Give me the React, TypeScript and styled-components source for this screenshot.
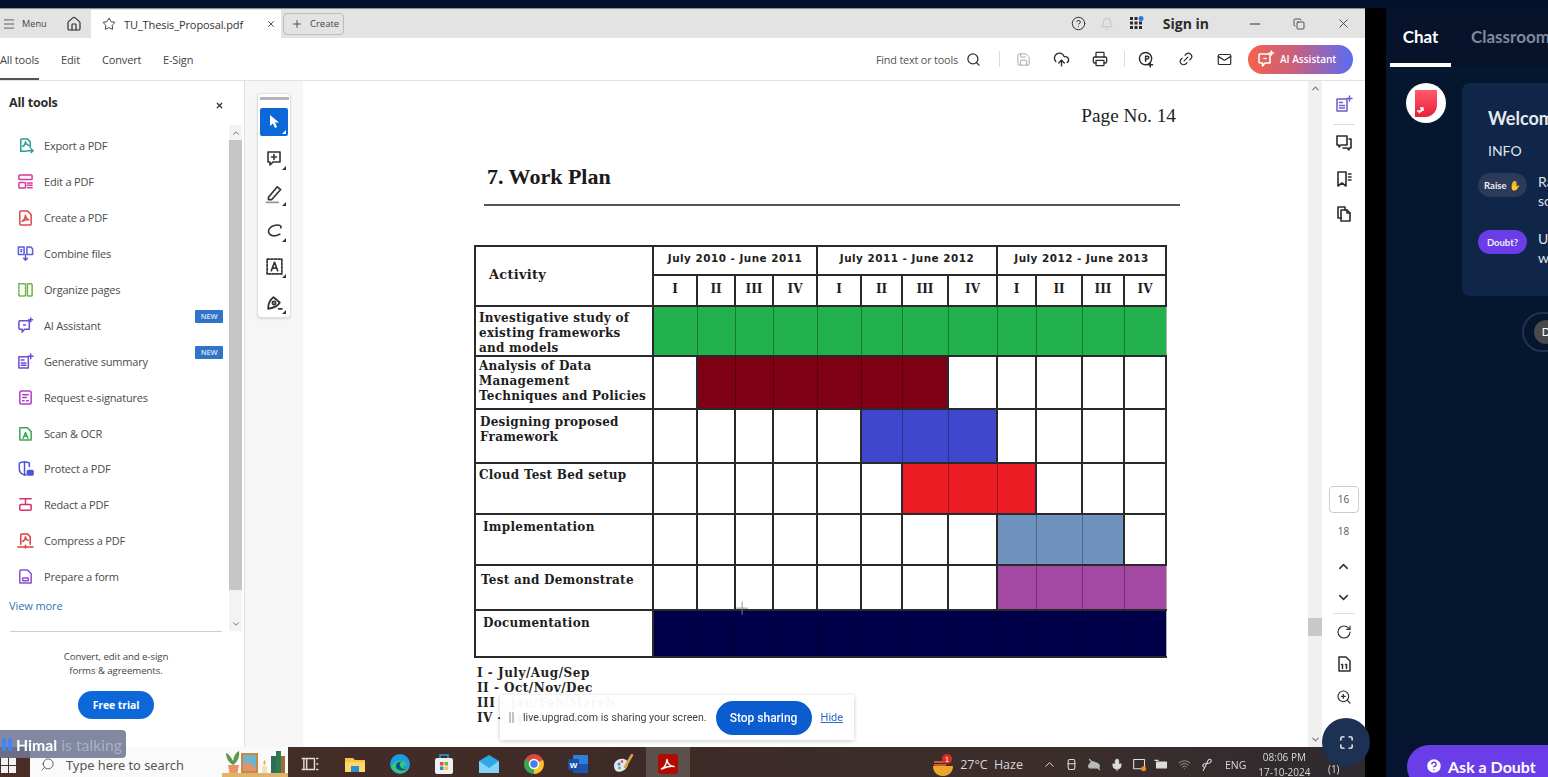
import React from "react";
import styled, { createGlobalStyle } from "styled-components";
import {
  Bell, ChevronDown, ChevronUp, CircleHelp, CloudUpload, Copy, Home, Link2, Mail, Menu, Minus,
  Plus, Printer, RotateCw, Save, Search, Star, X, ZoomIn, Maximize, Wifi, Mic,
} from "lucide-react";

const GlobalStyle = createGlobalStyle`
  html, body { margin: 0; padding: 0; background: #000; }
  body { font-family: "Open Sans", "Liberation Sans", sans-serif; overflow: hidden; }
  * { box-sizing: border-box; }
`;

const Page = styled.div`
  position: relative;
  width: 1548px;
  height: 777px;
  overflow: hidden;
  background: #000;
  display: flex;
  flex-direction: column;
`;
const TopStrip = styled.div`
  height: 8px;
  flex: none;
  background: #04132d;
  border-bottom: 1px solid #04132d;
`;
const Body = styled.div`
  flex: 1;
  min-height: 0;
  display: flex;
`;
const Share = styled.div`
  width: 1365px;
  flex: none;
  display: flex;
  flex-direction: column;
  background: #fff;
  filter: blur(0.35px);
`;
const Gutter = styled.div`
  width: 21px;
  flex: none;
  background: #000;
`;

/* tab bar */
const TabBar = styled.div`
  height: 30px;
  flex: none;
  background: #e3e3e3;
  border-top: 1px solid #8d8d8d;
  display: flex;
  align-items: center;
  color: #333;
`;
const MenuBtn = styled.div`
  width: 66px;
  padding-left: 2px;
  display: flex;
  align-items: center;
  gap: 6px;
  font-size: 9.2px;
  color: #444;
`;
const HomeBtn = styled.div`
  width: 25px;
  display: flex;
`;
const ActiveTab = styled.div`
  width: 190px;
  height: 28px;
  margin-top: 1px;
  align-self: flex-end;
  background: #fff;
  display: flex;
  align-items: center;
  padding-left: 11px;
  font-size: 11px;
  letter-spacing: -0.1px;
  color: #333;
  span { margin: 0 17px 0 8px; width: 125px; white-space: nowrap; }
`;
const CreateBtn = styled.div`
  margin-left: 2px;
  width: 61px;
  height: 22px;
  border: 1px solid #bdbdbd;
  border-radius: 4px;
  display: flex;
  align-items: center;
  padding-left: 7px;
  gap: 7px;
  font-size: 9.5px;
  color: #444;
`;
const TabRight = styled.div`
  margin-left: auto;
  display: flex;
  align-items: center;
`;
const SignIn = styled.div`
  font-size: 14px;
  font-weight: 700;
  color: #2a2a2a;
  margin: 0 24px 0 12px;
`;
const WinBtn = styled.div`
  width: 44px;
  display: flex;
  justify-content: center;
`;
const IconSlot = styled.div<{ $w: number }>`
  width: ${(p) => p.$w}px;
  display: flex;
  justify-content: center;
  align-items: center;
  flex: none;
`;

/* tool bar */
const ToolBar = styled.div`
  height: 43px;
  flex: none;
  display: flex;
  align-items: stretch;
  border-bottom: 1px solid #e2e2e2;
  background: #fff;
`;
const NavTab = styled.div<{ $active?: boolean; $w: number }>`
  width: ${(p) => p.$w}px;
  padding-top: 2px;
  font-size: 11px;
  color: #444;
  display: flex;
  align-items: center;
  letter-spacing: -0.15px;
  white-space: nowrap;
  border-bottom: ${(p) => (p.$active ? "2px solid #555" : "2px solid transparent")};
  margin-right: 22px;
`;
const ToolRight = styled.div`
  margin-left: auto;
  display: flex;
  align-items: center;
  padding-right: 12px;
`;
const FindText = styled.div`
  font-size: 10.9px;
  letter-spacing: -0.2px;
  color: #555;
  margin-right: 6px;
  white-space: nowrap;
`;
const Divider = styled.div`
  width: 1px;
  height: 16px;
  background: #ddd;
`;
const AiButton = styled.div`
  margin-left: 2px;
  width: 105px;
  height: 29px;
  border-radius: 15px;
  background: linear-gradient(90deg, #f2634c 0%, #c8607f 45%, #5a6cf5 100%);
  color: #fff;
  font-size: 10px;
  font-weight: 600;
  display: flex;
  align-items: center;
  padding-left: 9px;
  gap: 5px;
  white-space: nowrap;
`;
const TiltedLink = styled(Link2)`
  transform: rotate(-45deg);
`;

/* workspace */
const Workspace = styled.div`
  flex: 1;
  min-height: 0;
  display: flex;
`;
const Sidebar = styled.aside`
  width: 245px;
  flex: none;
  border-right: 1px solid #e0e0e0;
  display: flex;
  flex-direction: column;
`;
const SideHead = styled.div`
  height: 44px;
  flex: none;
  padding: 13px 20px 0 9px;
  display: flex;
  justify-content: space-between;
  font-size: 12.5px;
  font-weight: 700;
  color: #2c2c2c;
  letter-spacing: -0.2px;
  svg { margin-top: 7px; }
`;
const SideMain = styled.div`
  height: 506px;
  flex: none;
  display: flex;
`;
const ToolList = styled.div`
  width: 229px;
  padding-top: 3px;
  flex: none;
`;
const ToolRow = styled.div`
  position: relative;
  height: 35.9px;
  padding-left: 17px;
  display: flex;
  align-items: center;
  gap: 10px;
  font-size: 11px;
  letter-spacing: -0.2px;
  color: #4b4b4b;
`;
const NewBadge = styled.span`
  position: absolute;
  right: 6px;
  top: 3px;
  width: 28px;
  height: 13px;
  background: #2f74c9;
  color: #dbe8f7;
  font-size: 7.5px;
  font-weight: 600;
  text-align: center;
  line-height: 13px;
  border-radius: 1px;
`;
const ViewMore = styled.div`
  padding-left: 9px;
  font-size: 11px;
  letter-spacing: -0.1px;
  color: #2f74b5;
  line-height: 22px;
`;
const SideScroll = styled.div`
  width: 13px;
  flex: none;
  background: #f3f3f3;
  padding: 3px 0 2px;
  display: flex;
  flex-direction: column;
  align-items: center;
  gap: 2px;
  color: #666;
`;
const SideThumb = styled.div`
  width: 100%;
  height: 450px;
  background: #c6c6c6;
  margin-bottom: auto;
`;
const Promo = styled.div`
  margin: 0 22px 0 10px;
  border-top: 1px solid #cfcfcf;
  padding-top: 18px;
  text-align: center;
  font-size: 9.7px;
  line-height: 14px;
  color: #444;
  letter-spacing: -0.1px;
`;
const FreeTrial = styled.div`
  margin: 13px auto 0;
  width: 76px;
  height: 28px;
  border-radius: 14px;
  background: #0c68d8;
  color: #fff;
  font-size: 10.5px;
  font-weight: 700;
  line-height: 28px;
`;

/* document viewer */
const ToolGutter = styled.div`
  width: 58px;
  flex: none;
  background: #f6f6f6;
  padding: 12px 0 0 12px;
`;
const Palette = styled.div`
  width: 34px;
  height: 225px;
  background: #fff;
  border: 1px solid #e0e0e0;
  border-radius: 4px;
  box-shadow: 0 1px 2px rgba(0, 0, 0, 0.12);
  padding: 3px 2px;
  display: flex;
  flex-direction: column;
  align-items: center;
`;
const Handle = styled.div`
  width: 29px;
  height: 3px;
  background: #b5b5b5;
  margin-bottom: 8px;
  flex: none;
`;
const PaletteBtn = styled.div<{ $on?: boolean }>`
  position: relative;
  width: 28px;
  height: 28px;
  flex: none;
  margin-bottom: 8px;
  border-radius: 2px;
  background: ${(p) => (p.$on ? "#0c68d8" : "transparent")};
  color: ${(p) => (p.$on ? "#fff" : "#333")};
  display: flex;
  align-items: center;
  justify-content: center;
  &::after {
    content: "";
    position: absolute;
    right: 2px;
    bottom: 2px;
    border-style: solid;
    border-width: 0 0 4px 4px;
    border-color: transparent transparent ${(p) => (p.$on ? "#fff" : "#333")} transparent;
  }
`;
const Sheet = styled.main`
  flex: 1;
  min-width: 0;
  background: #fff;
  padding: 25px 0 0;
  overflow: hidden;
`;
const PageNo = styled.div`
  font-family: "Liberation Serif", serif;
  font-size: 19.3px;
  line-height: 20px;
  text-align: right;
  padding-right: 132px;
  color: #222;
`;
const Heading = styled.h2`
  margin: 38px 0 0 184px;
  font-family: "Liberation Serif", serif;
  font-size: 22px;
  line-height: 26px;
  font-weight: 700;
  color: #1a1a1a;
`;
const Rule = styled.div`
  margin: 14px 0 0 181px;
  width: 696px;
  height: 2px;
  background: #555;
`;
const Gantt = styled.table`
  margin: 39px 0 0 171px;
  width: 691px;
  table-layout: fixed;
  border-collapse: collapse;
  font-family: "DejaVu Serif", serif;
  font-weight: 700;
  color: #1d1d1d;
`;
const Cell = styled.td<{ $bg?: string }>`
  padding: 0 0 4px;
  border: 2px solid #2a2a2a;
  ${(p) => p.$bg && "border-left: 1px solid rgba(0, 0, 0, 0.3); border-right: 1px solid rgba(0, 0, 0, 0.3);"}
  background: ${(p) => p.$bg ?? "#fff"};
  text-align: center;
  font-size: 12px;
`;
const YearCell = styled(Cell)`
  padding-bottom: 6px;
  font-family: "DejaVu Sans", sans-serif;
  font-size: 10.4px;
  letter-spacing: 0.5px;
`;
const Label = styled.td<{ $indent: number; $top: number }>`
  padding: ${(p) => p.$top}px 0 0 ${(p) => p.$indent}px;
  border: 2px solid #2a2a2a;
  font-size: 12px;
  line-height: 15px;
  letter-spacing: 0.25px;
  vertical-align: top;
  white-space: nowrap;
  div:last-child { margin-bottom: -2px; }
`;
const ActivityLabel = styled(Label)`
  vertical-align: middle;
  padding-bottom: 3px;
  font-size: 13px;
`;
const Legend = styled.div`
  margin: 8px 0 0 174px;
  font-family: "DejaVu Serif", serif;
  font-weight: 700;
  font-size: 12px;
  line-height: 15px;
  letter-spacing: 0.5px;
  color: #222;
`;
const ViewScroll = styled.div`
  width: 14px;
  flex: none;
  background: #f0f0f0;
  padding: 2px 0;
  display: flex;
  flex-direction: column;
  align-items: center;
  color: #777;
`;
const ViewThumb = styled.div`
  width: 100%;
  height: 18px;
  background: #c8c8c8;
  margin: 524px 0 auto;
`;
const Rail = styled.div`
  width: 43px;
  flex: none;
  background: #fff;
  display: flex;
  flex-direction: column;
  align-items: center;
  padding-top: 14px;
  color: #333;
`;
const RailIcon = styled.div<{ $gap: number }>`
  height: 18px;
  margin-bottom: ${(p) => p.$gap}px;
  display: flex;
  align-items: center;
  justify-content: center;
  color: #333;
`;
const RailRule = styled.div`
  width: 22px;
  height: 1px;
  background: #ddd;
  margin-bottom: 9px;
  flex: none;
`;
const PageBox = styled.div`
  margin-top: 263px;
  width: 30px;
  height: 27px;
  border: 1px solid #ccc;
  border-radius: 4px;
  font-size: 10px;
  color: #555;
  text-align: center;
  line-height: 25px;
`;
const PageNum = styled.div`
  margin: 9px 0 17px;
  font-size: 10px;
  line-height: 18px;
  color: #555;
`;

/* task bar */
const TaskBar = styled.div`
  height: 30px;
  flex: none;
  background: linear-gradient(90deg, #4a2d26 0%, #3d2b28 50%, #3a2e2c 80%, #2e2a30 100%);
  display: flex;
  align-items: center;
  color: #ddd;
`;
const Start = styled.div`
  width: 30px;
  padding: 6px 0 0 1px;
  display: flex;
`;
const SearchBox = styled.div`
  width: 258px;
  height: 30px;
  background: #fafafa;
  display: flex;
  align-items: center;
  padding: 5px 0 0 10px;
  gap: 11px;
  color: #555;
  font-size: 12.8px;
  font-family: "Noto Sans", sans-serif;
  position: relative;
`;
const MirroredSearch = styled(Search)`
  transform: scaleX(-1);
`;
const Decor = styled.div`
  position: absolute;
  right: 0;
  top: 0;
`;
const TaskIcon = styled.div<{ $on?: boolean }>`
  width: 44.7px;
  height: 30px;
  flex: none;
  padding-top: 3px;
  display: flex;
  align-items: center;
  justify-content: center;
  background: ${(p) => (p.$on ? "#5c504c" : "transparent")};
`;
const TaskIcons = styled.div`
  display: flex;
`;
const Tray = styled.div`
  margin-left: auto;
  padding: 5px 20px 0 0;
  display: flex;
  align-items: center;
  font-size: 12px;
  color: #d8d8d8;
`;
const Weather = styled.div`
  font-size: 12.5px;
  margin: 0 15px 0 5px;
  white-space: nowrap;
  word-spacing: 3px;
`;
const TrayIcon = styled.div`
  width: 22.5px;
  display: flex;
  justify-content: center;
`;
const Lang = styled.div`
  font-size: 10.5px;
  margin: 0 12px 0 7px;
`;
const Clock = styled.div`
  font-size: 10px;
  line-height: 15px;
  text-align: center;
  white-space: nowrap;
`;
const NotifCount = styled(TrayIcon)`
  margin: 8px 0 0 12px;
  font-size: 10px;
  color: #ddd;
`;

/* right panel */
const Panel = styled.section`
  flex: 1;
  min-width: 0;
  overflow: hidden;
  background: #05162f;
  color: #fff;
  font-family: Lato, "Open Sans", sans-serif;
  display: flex;
  flex-direction: column;
`;
const PanelTabs = styled.div`
  height: 59px;
  flex: none;
  display: flex;
  padding-left: 4px;
  background: #06132b;
`;
const PanelTab = styled.div<{ $on?: boolean }>`
  flex: none;
  width: ${(p) => (p.$on ? "61px" : "auto")};
  margin-right: 20px;
  padding-top: 18px;
  text-align: center;
  white-space: nowrap;
  font-size: 17px;
  font-weight: 700;
  color: ${(p) => (p.$on ? "#fff" : "#7f8a9c")};
  border-bottom: ${(p) => (p.$on ? "4px solid #fff" : "none")};
`;
const Feed = styled.div`
  flex: 1;
  padding: 16px 0 0 20px;
`;
const Message = styled.div`
  display: flex;
  gap: 16px;
  width: 500px;
`;
const Avatar = styled.div`
  width: 40px;
  height: 40px;
  flex: none;
  border-radius: 50%;
  background: #fff;
  display: flex;
  align-items: center;
  justify-content: center;
`;
const Card = styled.div`
  width: 300px;
  height: 213px;
  border-radius: 8px;
  background: #0f2648;
  padding: 22px 0 0 16px;
`;
const Welcome = styled.div`
  margin-left: 10px;
  font-size: 18px;
  font-weight: 700;
  line-height: 26px;
  color: #e6e9ef;
`;
const Info = styled.div`
  margin: 11px 0 12px 10px;
  font-size: 14px;
  line-height: 18px;
  color: #dfe3ea;
`;
const CmdRow = styled.div`
  display: flex;
  gap: 11px;
  height: 57px;
`;
const CmdPill = styled.div<{ $purple?: boolean }>`
  width: 49px;
  height: 24px;
  flex: none;
  margin-top: 1px;
  border-radius: 12px;
  background: ${(p) => (p.$purple ? "#6a3de8" : "#2a3a58")};
  font-size: 9.5px;
  font-weight: 700;
  color: #eef0f5;
  display: flex;
  align-items: center;
  justify-content: center;
  gap: 2px;
  white-space: nowrap;
`;
const CmdText = styled.div`
  font-size: 14px;
  line-height: 19px;
  color: #dfe3ea;
  white-space: nowrap;
`;
const CenterChip = styled.div`
  margin: 16px 0 0 116px;
  width: 200px;
  height: 40px;
  border: 2px solid #22324f;
  border-radius: 20px;
  padding: 4px 0 0 10px;
`;
const ChipAvatar = styled.div`
  width: 24px;
  height: 24px;
  margin-top: 2px;
  border-radius: 50%;
  background: #4a4a4a;
  font-size: 11px;
  text-align: center;
  line-height: 24px;
`;
const PanelFoot = styled.div`
  height: 42px;
  flex: none;
  background: #061431;
  padding: 10px 0 0 21px;
`;
const AskBtn = styled.div`
  width: 200px;
  height: 44px;
  border-radius: 22px;
  background: #6a3de8;
  padding: 12px 0 0 18px;
  display: flex;
  gap: 5px;
  font-size: 16px;
  font-weight: 700;
  line-height: 19px;
  white-space: nowrap;
`;

/* overlays */
const TalkBadge = styled.div`
  position: absolute;
  left: 0;
  top: 730px;
  width: 126px;
  height: 28px;
  background: rgba(112, 120, 146, 0.88);
  border-radius: 0 4px 4px 0;
  display: flex;
  align-items: center;
  padding-left: 2px;
  font-family: Lato, sans-serif;
  font-size: 15.8px;
  font-weight: 700;
  color: #fff;
  white-space: nowrap;
  span { color: #aab0c2; margin-left: 4px; font-weight: 400; }
`;
const TalkBars = styled.div`
  display: flex;
  gap: 2px;
  margin-right: 4px;
  i { width: 4px; height: 13px; background: #3f86f5; border-radius: 2px; }
`;
const SharePrompt = styled.div`
  position: absolute;
  left: 500px;
  top: 695px;
  width: 354px;
  height: 45px;
  background: rgba(255, 255, 255, 0.96);
  box-shadow: 0 1px 4px rgba(0, 0, 0, 0.22);
  border-radius: 2px;
  display: flex;
  align-items: center;
  padding-left: 9px;
  font-family: Roboto, sans-serif;
  font-size: 10.6px;
  color: #444;
  white-space: nowrap;
`;
const Grip = styled.div`
  width: 5px;
  height: 11px;
  border-left: 2px solid #c4c4c4;
  border-right: 2px solid #c4c4c4;
  margin-right: 9px;
`;
const StopBtn = styled.div`
  margin-left: 9px;
  width: 96px;
  height: 34px;
  border-radius: 17px;
  background: #0b5ccf;
  color: #fff;
  font-size: 12px;
  font-weight: 500;
  text-align: center;
  line-height: 34px;
`;
const HideLink = styled.div`
  margin-left: 9px;
  font-size: 11px;
  color: #2b6cc4;
  text-decoration: underline;
`;
const FullBtn = styled.div`
  position: absolute;
  left: 1322px;
  top: 718px;
  width: 48px;
  height: 48px;
  border-radius: 50%;
  background: #1c3154;
  color: #fff;
  display: flex;
  align-items: center;
  justify-content: center;
`;
const Crosshair = styled.div`
  position: absolute;
  left: 735px;
  top: 600px;
  width: 15px;
  height: 17px;
  color: #8a8a8a;
`;

const Ico = ({ c = "currentColor", s = 16, w = 1.4, children }: { c?: string; s?: number; w?: number; children: React.ReactNode }) => (
  <svg width={s} height={s} viewBox="0 0 18 18" fill="none" stroke={c} strokeWidth={w} strokeLinecap="round" strokeLinejoin="round">
    {children}
  </svg>
);

const tools = [
  { name: "Export a PDF", c: "#2b9c96", d: <><path d="M4 15V3a1 1 0 0 1 1-1h6l3 3v6" /><path d="M4 15h6" /><path d="M6 10c2-1 3-3 3-5 0 2 2 4 4 4" /><path d="M11 14.5h6M15 12.5l2 2-2 2" /></> },
  { name: "Edit a PDF", c: "#d6399a", d: <><rect x="2" y="2" width="14" height="5" rx="1" /><rect x="2" y="10" width="7" height="6" rx="1" /><path d="M11 10.5h5M11 13h5M11 15.5h5" /></> },
  { name: "Create a PDF", c: "#e0474c", d: <><path d="M3 16V3a1 1 0 0 1 1-1h7l4 4v10a1 1 0 0 1-1 1H4a1 1 0 0 1-1-1Z" /><path d="M5.5 13c2-1 3.2-4 3.4-6.5C9.2 9 10.5 11 12.5 11.5c-2.5-.3-5 .3-7 1.5Z" /></> },
  { name: "Combine files", c: "#5a5fd8", d: <><path d="M1.5 2h6v8h-6zM10.5 2h4l2 2v6h-6z" /><path d="M4 5h1M4 7h1M9 10v6M7 14l2 2 2-2" /></> },
  { name: "Organize pages", c: "#6cb33f", d: <><path d="M2 3h7v13H2z" strokeDasharray="2 1.5" /><rect x="11" y="3" width="5" height="13" rx="1" /></> },
  { name: "AI Assistant", c: "#6a4fd4", badge: true, d: <><path d="M3 4h10v9H8l-2.5 3v-3H3a1 1 0 0 1-1-1V5a1 1 0 0 1 1-1Z" /><path d="M7 8.5h2" /><path d="M14.5 1v4M12.5 3h4" /></> },
  { name: "Generative summary", c: "#6a4fd4", badge: true, d: <><path d="M2 4h10v12H2z" /><path d="M4.5 7.5h3M4.5 10.5h5M4.5 13h5" /><path d="M14.5 1v5M12 3.5h5" /></> },
  { name: "Request e-signatures", c: "#b140c7", d: <><rect x="3" y="2" width="12" height="14" rx="2" /><path d="M6 6h6M6 9h4M6 12.5h1.5M10 12.5h2" /></> },
  { name: "Scan & OCR", c: "#3fa654", d: <><path d="M3 16V3h8l4 4v9z" /><path d="M6.5 14l2.5-6 2.5 6M7.5 12h3" /></> },
  { name: "Protect a PDF", c: "#4c56d6", d: <><path d="M8 2C5 2 2.5 3 2.5 3v7c0 3 3 5 5.5 6 1 0 1.5-.5 1.5-.5" /><path d="M8 2v14" /><path d="M8 2c2 0 4 .5 5 1v4" /><rect x="11" y="11" width="6" height="5" rx="1" fill="#4c56d6" /></> },
  { name: "Redact a PDF", c: "#d6336c", d: <><path d="M3 3h12M9 3v6" /><rect x="3" y="9" width="12" height="6" rx="1" /></> },
  { name: "Compress a PDF", c: "#dc3f3f", d: <><path d="M4 13V3a1 1 0 0 1 1-1h6l3 3v8" /><path d="M6 10c2-1 3-3 3-5 0 2 2 4 3 4" /><path d="M1 16h16M9 14v3" /></> },
  { name: "Prepare a form", c: "#8d4fd0", d: <><path d="M3 16V3a1 1 0 0 1 1-1h7l4 4v10z" /><rect x="6" y="10.5" width="6" height="3" rx=".5" /></> },
];

const palette = [
  <svg key="a" width="14" height="16" viewBox="0 0 14 16" fill="currentColor"><path d="M3 1v11l3-2.5 2 4.5 2-1-2-4.5h4z" /></svg>,
  <Ico key="b" s={18} w={1.6}><path d="M3 3h12v10H8l-3 3v-3H3z" /><path d="M9 5.5v5M6.5 8h5" /></Ico>,
  <Ico key="c" s={20} w={1.5}><path d="M4 12 12 2.5l3 2.5-8 9H4z" /><path d="M2 16.5h11" stroke="#999" /></Ico>,
  <Ico key="d" s={19} w={1.5}><path d="M5 13C1.5 10 4 5 10 4c4-.7 6 1 5 2.5" /><path d="M5 13c2 1.5 6 1 9-.5" /></Ico>,
  <Ico key="e" s={19} w={1.6}><rect x="2" y="2" width="14" height="14" strokeDasharray="2 1.5" /><path d="M6 13 9 5l3 8M7 10.5h4" /></Ico>,
  <Ico key="f" s={19} w={1.7}><path d="M3 15c0-4 1-8 5-11l6 5c-2 4-6 5-11 6Z" /><circle cx="8.5" cy="9.5" r="1.5" /><path d="M13 15h3" /></Ico>,
];

const colWidths = [178, 44, 38, 38, 44, 44, 41, 46, 49, 39, 46, 42, 42];
const quarters = ["I", "II", "III", "IV", "I", "II", "III", "IV", "I", "II", "III", "IV"];
const rows = [
  { label: ["Investigative study of", "existing frameworks", "and models"], h: 50, indent: 3, top: 4, color: "#22b14c", from: 0, to: 11 },
  { label: ["Analysis of Data", "Management", "Techniques and Policies"], h: 53, indent: 3, top: 2, color: "#7f0015", from: 1, to: 6 },
  { label: ["Designing proposed", "Framework"], h: 54, indent: 4, top: 5, color: "#3f48cc", from: 5, to: 7 },
  { label: ["Cloud Test Bed setup"], h: 51, indent: 3, top: 4, color: "#ed1c24", from: 6, to: 8 },
  { label: ["Implementation"], h: 51, indent: 7, top: 5, color: "#7092be", from: 8, to: 10 },
  { label: ["Test and Demonstrate"], h: 45, indent: 5, top: 7, color: "#a349a4", from: 8, to: 11 },
  { label: ["Documentation"], h: 47, indent: 7, top: 5, color: "#00004a", from: 0, to: 11 },
];

const AppIcons = [
  <Ico key="tv" s={20} c="#ddd" w={1.3}><path d="M2 4h3M2 14h3M6 4h7v10H6zM15 4h1M15 9h1M15 14h1M3.5 4v10" /></Ico>,
  <svg key="ex" width="22" height="20" viewBox="0 0 22 20"><path d="M1 4h8l2 2h10v12H1z" fill="#f6c445" /><path d="M1 8h20v10H1z" fill="#fbd868" /><rect x="7" y="12" width="8" height="6" fill="#2a8fd8" /></svg>,
  <svg key="ed" width="22" height="22" viewBox="0 0 22 22"><circle cx="11" cy="11" r="10" fill="#1b9de2" /><path d="M2 14c3-7 11-8 15-4 1 2-1 3-4 3 2 3 5 3 7 1-2 5-8 8-13 5-2-1-4-3-5-5Z" fill="#37c76d" /><path d="M7 13c0-3 3-5 6-4-2 0-3 2-2 4 1 3 5 4 8 2-4 4-12 3-12-2Z" fill="#0c4d92" /></svg>,
  <svg key="st" width="22" height="22" viewBox="0 0 22 22"><rect x="2" y="5" width="18" height="16" rx="2" fill="#f0f0f0" /><path d="M7 5V2h8v3" fill="none" stroke="#2a9fd8" strokeWidth="1.5" /><rect x="7" y="9" width="3.5" height="3.5" fill="#e74c3c" /><rect x="11.5" y="9" width="3.5" height="3.5" fill="#6cb33f" /><rect x="7" y="13.5" width="3.5" height="3.5" fill="#2a8fd8" /><rect x="11.5" y="13.5" width="3.5" height="3.5" fill="#f6c445" /></svg>,
  <svg key="ma" width="22" height="20" viewBox="0 0 22 20"><path d="M1 7 11 1l10 6v12H1z" fill="#2fa9e6" /><path d="m1 7 10 7 10-7v12H1z" fill="#7fd4f7" /></svg>,
  <svg key="ch" width="22" height="22" viewBox="0 0 22 22"><circle cx="11" cy="11" r="10" fill="#e0483d" /><path d="M11 11 2.5 6A10 10 0 0 0 11 21z" fill="#35a853" /><path d="M11 11v10a10 10 0 0 0 9-14z" fill="#f8c52c" /><circle cx="11" cy="11" r="4.5" fill="#3f83ea" stroke="#fff" strokeWidth="1.5" /></svg>,
  <svg key="wd" width="22" height="20" viewBox="0 0 22 20"><rect x="6" y="1" width="15" height="18" rx="1" fill="#2f7fe0" /><rect x="6" y="10" width="15" height="9" fill="#1a55b0" /><rect x="1" y="5" width="11" height="11" rx="1" fill="#184ea6" /><text x="6.5" y="13.5" fontSize="8" fontWeight="700" fill="#fff" textAnchor="middle" fontFamily="Liberation Sans, sans-serif">W</text></svg>,
  <svg key="pa" width="22" height="22" viewBox="0 0 22 22"><path d="M2 13c0-5 5-8 10-7 4 1 5 5 3 8-2 4-8 6-11 4-1-1-2-3-2-5Z" fill="#dfe6ee" /><circle cx="7" cy="11" r="1.5" fill="#3f83ea" /><circle cx="10" cy="8.5" r="1.2" fill="#e0483d" /><circle cx="7.5" cy="15" r="1.4" fill="#6cb33f" /><path d="m13 14 7-12" stroke="#d8a14a" strokeWidth="2.5" strokeLinecap="round" /></svg>,
  <svg key="ac" width="22" height="22" viewBox="0 0 22 22"><rect x="1" y="1" width="20" height="20" rx="3" fill="#b30b00" /><path d="M4.5 16c3-1.5 5-5 5.5-9.5.5 4 3 6.5 7 7-4-.5-8.5.5-12.5 2.5Z" fill="none" stroke="#fff" strokeWidth="1.5" strokeLinejoin="round" /></svg>,
];

export default function App() {
  return (
    <Page>
      <GlobalStyle />
      <TopStrip />
      <Body>
        <Share>
          <TabBar>
            <MenuBtn>
              <Menu size={14} strokeWidth={1.4} />
              Menu
            </MenuBtn>
            <HomeBtn>
              <Home size={16} strokeWidth={1.8} />
            </HomeBtn>
            <ActiveTab>
              <Star size={14} strokeWidth={1.6} />
              <span>TU_Thesis_Proposal.pdf</span>
              <X size={10} strokeWidth={2} />
            </ActiveTab>
            <CreateBtn>
              <Plus size={12} strokeWidth={1.8} />
              Create
            </CreateBtn>
            <TabRight>
              <IconSlot $w={29}><CircleHelp size={15} strokeWidth={1.6} /></IconSlot>
              <IconSlot $w={29}><Bell size={14} strokeWidth={1.2} color="#b5b5b5" /></IconSlot>
              <IconSlot $w={29}>
                <svg width="15" height="15" viewBox="0 0 15 15" fill="#2c2c2c">
                  {[1, 5.5, 10].flatMap((x) => [1, 5.5, 10].map((y) => <rect key={`${x}-${y}`} x={x} y={y} width="3" height="3" />))}
                  <circle cx="12" cy="2.5" r="2.5" fill="#2f74f0" />
                </svg>
              </IconSlot>
              <SignIn>Sign in</SignIn>
              <WinBtn><Minus size={16} strokeWidth={1.6} /></WinBtn>
              <WinBtn><Copy size={12} strokeWidth={1.6} /></WinBtn>
              <WinBtn><X size={15} strokeWidth={1.3} /></WinBtn>
            </TabRight>
          </TabBar>

          <ToolBar>
            <NavTab $active $w={39}>All tools</NavTab>
            <NavTab $w={19}>Edit</NavTab>
            <NavTab $w={39}>Convert</NavTab>
            <NavTab $w={32}>E-Sign</NavTab>
            <ToolRight>
              <FindText>Find text or tools</FindText>
              <IconSlot $w={18}><Search size={15} strokeWidth={2.1} color="#333" /></IconSlot>
              <IconSlot $w={17} />
              <Divider />
              <IconSlot $w={46}><Save size={15} strokeWidth={1.3} color="#999" /></IconSlot>
              <IconSlot $w={30}><CloudUpload size={17} strokeWidth={1.9} color="#2c2c2c" /></IconSlot>
              <IconSlot $w={48}><Printer size={16} strokeWidth={1.9} color="#2c2c2c" /></IconSlot>
              <Divider />
              <IconSlot $w={43}>
                <Ico s={17} c="#2c2c2c" w={1.5}><circle cx="8" cy="8" r="6.5" /><path d="M8 11V5.5h2a1.5 1.5 0 0 1 0 3H8M13 12v5M10.5 14.5h5" /></Ico>
              </IconSlot>
              <IconSlot $w={35}><TiltedLink size={16} strokeWidth={1.8} color="#2c2c2c" /></IconSlot>
              <IconSlot $w={43}><Mail size={15} strokeWidth={1.9} color="#2c2c2c" /></IconSlot>
              <AiButton>
                <Ico s={18} c="#fff" w={1.6}><path d="M3 4h10v9H8l-2.5 3v-3H3a1 1 0 0 1-1-1V5a1 1 0 0 1 1-1Z" /><path d="M7 8.5h2" /><path d="M14.5 1v4M12.5 3h4" /></Ico>
                AI Assistant
              </AiButton>
            </ToolRight>
          </ToolBar>

          <Workspace>
            <Sidebar>
              <SideHead>
                All tools
                <X size={9} strokeWidth={3.2} color="#333" />
              </SideHead>
              <SideMain>
                <ToolList>
                  {tools.map((t) => (
                    <ToolRow key={t.name}>
                      <Ico c={t.c} s={17} w={1.6}>{t.d}</Ico>
                      {t.name}
                      {t.badge && <NewBadge>NEW</NewBadge>}
                    </ToolRow>
                  ))}
                  <ViewMore>View more</ViewMore>
                </ToolList>
                <SideScroll>
                  <ChevronUp size={10} strokeWidth={2.2} />
                  <SideThumb />
                  <ChevronDown size={10} strokeWidth={2.2} />
                </SideScroll>
              </SideMain>
              <Promo>
                Convert, edit and e-sign
                <br />
                forms &amp; agreements.
                <FreeTrial>Free trial</FreeTrial>
              </Promo>
            </Sidebar>

            <ToolGutter>
              <Palette>
                <Handle />
                {palette.map((icon, i) => (
                  <PaletteBtn key={i} $on={i === 0}>{icon}</PaletteBtn>
                ))}
              </Palette>
            </ToolGutter>

            <Sheet>
              <PageNo>Page No. 14</PageNo>
              <Heading>7. Work Plan</Heading>
              <Rule />
              <Gantt>
                <colgroup>
                  {colWidths.map((w, i) => <col key={i} style={{ width: w }} />)}
                </colgroup>
                <tbody>
                  <tr style={{ height: 29 }}>
                    <ActivityLabel $indent={13} $top={0} rowSpan={2}>Activity</ActivityLabel>
                    <YearCell colSpan={4}>July 2010 - June 2011</YearCell>
                    <YearCell colSpan={4}>July 2011 - June 2012</YearCell>
                    <YearCell colSpan={4}>July 2012 - June 2013</YearCell>
                  </tr>
                  <tr style={{ height: 31 }}>
                    {quarters.map((q, i) => <Cell key={i}>{q}</Cell>)}
                  </tr>
                  {rows.map((r) => (
                    <tr key={r.label[0]} style={{ height: r.h }}>
                      <Label $indent={r.indent} $top={r.top}>
                        {r.label.map((l) => <div key={l}>{l}</div>)}
                      </Label>
                      {quarters.map((_, i) => (
                        <Cell key={i} $bg={i >= r.from && i <= r.to ? r.color : undefined} />
                      ))}
                    </tr>
                  ))}
                </tbody>
              </Gantt>
              <Legend>
                <div>I - July/Aug/Sep</div>
                <div>II - Oct/Nov/Dec</div>
                <div>III - Jan/Feb/March</div>
                <div>IV - Apr/May/June</div>
              </Legend>
            </Sheet>

            <ViewScroll>
              <ChevronUp size={11} strokeWidth={2.4} />
              <ViewThumb />
              <ChevronDown size={11} strokeWidth={2.4} />
            </ViewScroll>

            <Rail>
              <RailIcon $gap={11}>
                <Ico s={18} c="#6a5fc8" w={1.5}><path d="M2 4h10v12H2z" /><path d="M4.5 7.5h3M4.5 10.5h5M4.5 13h5" /><path d="M14.5 1v5M12 3.5h5" /></Ico>
              </RailIcon>
              <RailRule />
              <RailIcon $gap={18}>
                <Ico s={18} c="#2c2c2c" w={1.6}><path d="M2 2h10v9H6l-2 2v-2H2z" /><path d="M14 5h2v9h-2v2l-2-2H8" /></Ico>
              </RailIcon>
              <RailIcon $gap={17}>
                <Ico s={18} c="#2c2c2c" w={1.6}><path d="M3 2h8v14l-4-3-4 3z" /><path d="M13.5 4H16M13.5 7H16M13.5 10H16" /></Ico>
              </RailIcon>
              <RailIcon $gap={0}>
                <Ico s={18} c="#2c2c2c" w={1.6}><path d="M6 5h6l3 3v8H6z" /><path d="M12 5v3h3" /><path d="M6 13H3V2h7v3" /></Ico>
              </RailIcon>
              <PageBox>16</PageBox>
              <PageNum>18</PageNum>
              <RailIcon $gap={13}><ChevronUp size={15} strokeWidth={2.4} /></RailIcon>
              <RailIcon $gap={7}><ChevronDown size={15} strokeWidth={2.4} /></RailIcon>
              <RailRule />
              <RailIcon $gap={14}><RotateCw size={16} strokeWidth={1.7} /></RailIcon>
              <RailIcon $gap={15}>
                <Ico s={18} c="#2c2c2c" w={1.5}><path d="M4 16V2h7l4 4v10z" /><path d="M6.5 9.5h1v4M10.5 9.5h1v4" /></Ico>
              </RailIcon>
              <RailIcon $gap={0}><ZoomIn size={16} strokeWidth={1.8} /></RailIcon>
            </Rail>
          </Workspace>

          <TaskBar>
            <Start>
              <svg width="15" height="15" viewBox="0 0 15 15" fill="#f2f2f2">
                <rect width="7" height="7" /><rect x="8" width="7" height="7" /><rect y="8" width="7" height="7" /><rect x="8" y="8" width="7" height="7" />
              </svg>
            </Start>
            <SearchBox>
              <MirroredSearch size={15} strokeWidth={1.4} />
              Type here to search
              <Decor>
                <svg width="66" height="30" viewBox="0 0 66 30">
                  <rect x="0" y="26" width="66" height="4" fill="#e0b36a" />
                  <path d="M6 18h11l-1.5 8h-8z" fill="#e89467" />
                  <path d="M11 18C6 15 4 10 4 6c3 1 5 4 7 8 1-4 2-8 6-10 1 5-1 11-6 14Z" fill="#5b9a50" />
                  <rect x="19" y="6" width="17" height="20" fill="#c9893f" />
                  <rect x="21" y="8" width="13" height="16" fill="#6fb4cf" />
                  <path d="M21 24v-6l5-3 8 6v3z" fill="#e0946c" />
                  <rect x="40" y="19" width="5" height="7" fill="#f3e1b8" />
                  <path d="M42.5 13c1.5 2 1.5 4 0 5-1.5-1-1.5-3 0-5Z" fill="#f2a73b" />
                  <rect x="49" y="9" width="5" height="17" fill="#2c6e56" />
                  <rect x="54" y="4" width="5" height="22" fill="#2a7d4f" />
                  <rect x="59" y="9" width="4" height="17" fill="#a5683f" />
                </svg>
              </Decor>
            </SearchBox>
            <TaskIcons>
              {AppIcons.map((icon, i) => (
                <TaskIcon key={i} $on={i === AppIcons.length - 1}>{icon}</TaskIcon>
              ))}
            </TaskIcons>
            <Tray>
              <svg width="24" height="24" viewBox="0 0 24 24">
                <path d="M2 13h20c0 6-4 10-10 10S2 19 2 13Z" fill="#eea52e" />
                <path d="M3 9h10M3 12h12" stroke="#c85a30" strokeWidth="2" />
                <circle cx="16" cy="6" r="5" fill="#e02b20" />
                <text x="16" y="9" fontSize="8" fill="#fff" textAnchor="middle" fontFamily="Liberation Sans, sans-serif">1</text>
              </svg>
              <Weather>27°C Haze</Weather>
              <TrayIcon><ChevronUp size={15} strokeWidth={1.6} /></TrayIcon>
              <TrayIcon><Ico s={15} c="#ddd" w={1.3}><rect x="5" y="3" width="8" height="12" rx="2" /><path d="M5 8h8" /></Ico></TrayIcon>
              <TrayIcon><Ico s={15} c="#bbb" w={1.5}><path d="M3 13h11c2-3-1-6-4-6-2-2-6-1-7 2-1 1-1 3 0 4Z" fill="#bbb" /><path d="m3 3 12 12" /></Ico></TrayIcon>
              <TrayIcon><Mic size={14} fill="#ddd" strokeWidth={1.5} /></TrayIcon>
              <TrayIcon><Ico s={15} c="#ddd" w={1.3}><rect x="2" y="3" width="13" height="11" /><circle cx="14" cy="14" r="3" fill="#f58a1f" stroke="none" /></Ico></TrayIcon>
              <TrayIcon><Ico s={15} c="#ddd" w={1.3}><rect x="3" y="6" width="12" height="7" fill="#ddd" /><path d="M1 4h4" /></Ico></TrayIcon>
              <TrayIcon><Wifi size={13} strokeWidth={1.5} color="#aaa" /></TrayIcon>
              <TrayIcon><Ico s={15} c="#ddd" w={1.3}><path d="M5 16c2-3 3-6 6-12 2-3 5 0 3 2-2 3-5 2-7 2-3 0-3 4-1 4" /></Ico></TrayIcon>
              <Lang>ENG</Lang>
              <Clock>08:06 PM<br />17-10-2024</Clock>
              <NotifCount>(1)</NotifCount>
            </Tray>
          </TaskBar>
        </Share>

        <Gutter />

        <Panel>
          <PanelTabs>
            <PanelTab $on>Chat</PanelTab>
            <PanelTab>Classroom</PanelTab>
          </PanelTabs>
          <Feed>
            <Message>
              <Avatar>
                <svg width="24" height="28" viewBox="0 0 24 28">
                  <defs>
                    <linearGradient id="shield" x1="0" y1="0" x2="0" y2="1">
                      <stop offset="0" stopColor="#ff5a6c" />
                      <stop offset="1" stopColor="#e9203a" />
                    </linearGradient>
                  </defs>
                  <path d="M1 1h22v15a12 12 0 0 1-12 12H1z" fill="url(#shield)" />
                  <path d="M3 22h5M6 19l3 0v3M5 24l4-5" stroke="#fff" strokeWidth="1.5" fill="none" />
                </svg>
              </Avatar>
              <Card>
                <Welcome>Welcome</Welcome>
                <Info>INFO</Info>
                <CmdRow>
                  <CmdPill>Raise ✋</CmdPill>
                  <CmdText>Raise<br />so</CmdText>
                </CmdRow>
                <CmdRow>
                  <CmdPill $purple>Doubt?</CmdPill>
                  <CmdText>Use<br />when</CmdText>
                </CmdRow>
              </Card>
            </Message>
            <CenterChip>
              <ChipAvatar>D</ChipAvatar>
            </CenterChip>
          </Feed>
          <PanelFoot>
            <AskBtn>
              <CircleHelp size={18} fill="#fff" color="#6a3de8" strokeWidth={2} />
              Ask a Doubt
            </AskBtn>
          </PanelFoot>
        </Panel>
      </Body>

      <Crosshair>
        <Ico s={16} w={1}><path d="M8 1v14M2 8h12" /></Ico>
      </Crosshair>
      <SharePrompt>
        <Grip />
        live.upgrad.com is sharing your screen.
        <StopBtn>Stop sharing</StopBtn>
        <HideLink>Hide</HideLink>
      </SharePrompt>
      <TalkBadge>
        <TalkBars><i /><i /></TalkBars>
        Himal<span>is talking</span>
      </TalkBadge>
      <FullBtn>
        <Maximize size={15} strokeWidth={2.2} />
      </FullBtn>
    </Page>
  );
}
